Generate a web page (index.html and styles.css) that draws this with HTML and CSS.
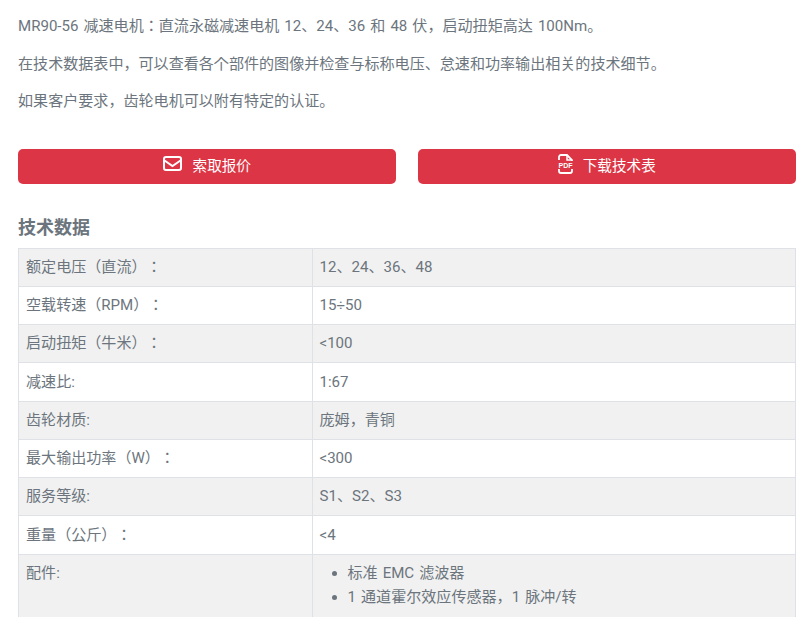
FILE: index.html
```html
<!DOCTYPE html>
<html>
<head>
<meta charset="utf-8">
<title>MR90-56</title>
<link rel="stylesheet" href="styles.css">
</head>
<body>
<main class="page">
  <p>MR90-56 减速电机：直流永磁减速电机 12、24、36 和 48 伏，启动扭矩高达 100Nm。</p>
  <p>在技术数据表中，可以查看各个部件的图像并检查与标称电压、怠速和功率输出相关的技术细节。</p>
  <p>如果客户要求，齿轮电机可以附有特定的认证。</p>
  <div class="actions">
    <a class="btn" href="#">
      <svg class="icon" width="20" height="16" viewBox="0 0 20 16"><rect x="1" y="1" width="17" height="13" rx="2" fill="none" stroke="#fff" stroke-width="2"/><path d="M1.500 4.500 L9.500 10 L17.500 4.500" fill="none" stroke="#fff" stroke-width="2"/></svg>
      <span>索取报价</span>
    </a>
    <a class="btn" href="#">
      <svg class="icon" width="15" height="20" viewBox="0 0 15 20"><path d="M1 6V3a2 2 0 0 1 2-2h6l5 5v1M1 15v2a2 2 0 0 0 2 2h9a2 2 0 0 0 2-2v-2" fill="none" stroke="#fff" stroke-width="1.800"/><path d="M9 1v5h5" fill="none" stroke="#fff" stroke-width="1.500"/><text class="pdf" x="7.500" y="13.800" text-anchor="middle">PDF</text></svg>
      <span>下载技术表</span>
    </a>
  </div>
  <h2>技术数据</h2>
  <table>
    <tbody>
      <tr><td>额定电压（直流）：</td><td>12、24、36、48</td></tr>
      <tr><td>空载转速（RPM）：</td><td>15÷50</td></tr>
      <tr><td>启动扭矩（牛米）：</td><td>&lt;100</td></tr>
      <tr><td>减速比:</td><td>1:67</td></tr>
      <tr><td>齿轮材质:</td><td>庞姆，青铜</td></tr>
      <tr><td>最大输出功率（W）：</td><td>&lt;300</td></tr>
      <tr><td>服务等级:</td><td>S1、S2、S3</td></tr>
      <tr><td>重量（公斤）：</td><td>&lt;4</td></tr>
      <tr><td>配件:</td><td><ul><li>标准 EMC 滤波器</li><li>1 通道霍尔效应传感器，1 脉冲/转</li></ul></td></tr>
    </tbody>
  </table>
</main>
</body>
</html>
```
FILE: styles.css
```css
html, body {
  margin: 0;
  padding: 0;
  background: #fff;
}
body {
  height: 617px;
  overflow: hidden;
  font-family: Roboto, "Noto Sans CJK JP", sans-serif;
  font-size: 15.07px;
  line-height: 22.5px;
  word-spacing: 1.3px;
  text-spacing-trim: space-all;
  color: #6c757d;
}
.page {
  padding: 15px 4px 0 18px;
}
p {
  margin: 0 0 15px;
}
.actions {
  display: grid;
  grid-template-columns: 378px 378px;
  gap: 22px;
  margin-top: 36px;
}
.btn {
  display: flex;
  align-items: center;
  justify-content: center;
  gap: 9.500px;
  height: 35px;
  background: #dc3545;
  border-radius: 5px;
  color: #fff;
  font-size: 14.600px;
  text-decoration: none;
}
.icon {
  display: block;
  margin-top: -4px;
}
.pdf {
  font-family: "Liberation Sans", sans-serif;
  font-size: 7px;
  font-weight: 700;
  fill: #fff;
  word-spacing: 0;
}
h2 {
  margin: 33px 0 9px;
  font-size: 18px;
  line-height: 22px;
  font-weight: 700;
  color: #6c757d;
}
table {
  width: 778px;
  border-collapse: collapse;
  table-layout: fixed;
}
td {
  border: 1px solid #dee2e6;
  padding: 7.375px 7px;
  vertical-align: top;
}
td:first-child {
  width: 278.500px;
}
tr:nth-child(odd) td {
  background: #f1f1f1;
}
ul {
  margin: -1px 0 8px;
  padding: 0 0 0 28px;
}
li {
  line-height: 24px;
}
```
